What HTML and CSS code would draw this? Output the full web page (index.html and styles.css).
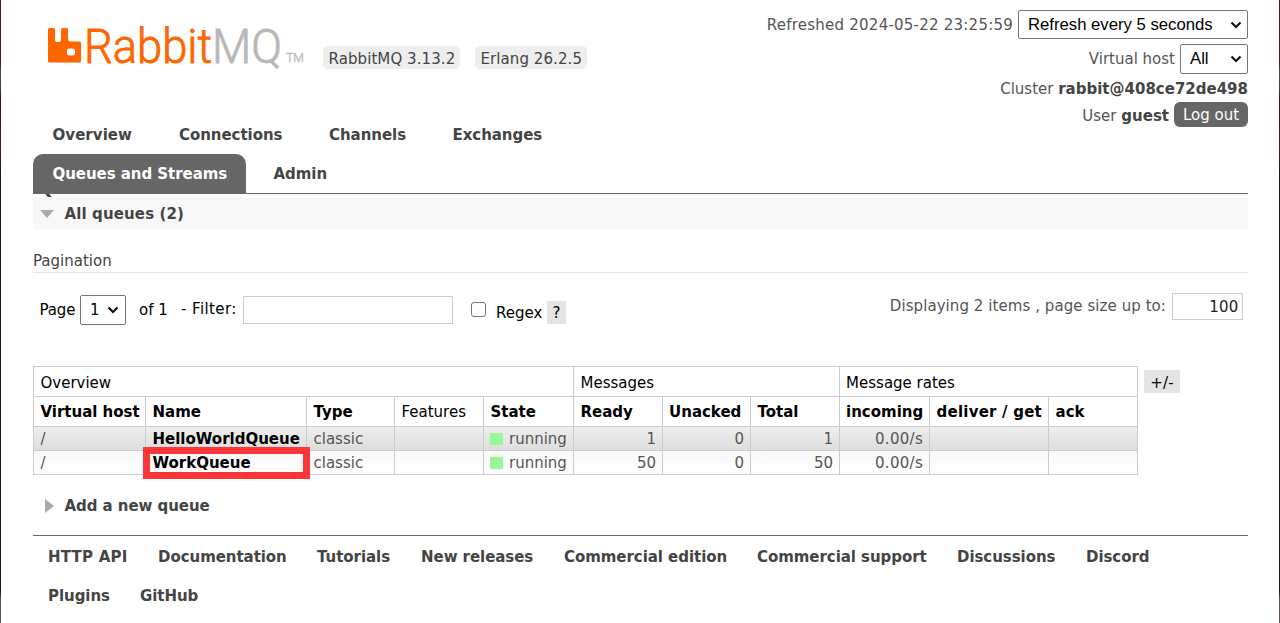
FILE: index.html
```html
<!DOCTYPE html>
<html lang="en">
<head>
<meta charset="utf-8">
<title>RabbitMQ Management</title>
<link rel="stylesheet" href="styles.css">
</head>
<body>
<div class="page">
  <header class="header">
    <div class="brand">
      <svg class="logo" width="260" height="60" viewBox="0 -10 260 60">
        <path class="mark" fill-rule="evenodd" d="M1.500 6h4q1.500 0 1.500 1.500V18q0 2 2 2h2q2 0 2-2V7.500Q13 6 14.500 6h4Q20 6 20 7.500V17q0 2.500 2.500 2.500h9Q33 19.500 33 21V39q0 1.500-1.500 1.500h-30Q0 40.500 0 39V7.500Q0 6 1.500 6zM21 26.500q-2 0-2 2v3q0 2 2 2h4q2 0 2-2v-3q0-2-2-2z"/>
        <text class="wm" x="36" y="40.500" textLength="198" lengthAdjust="spacingAndGlyphs"><tspan class="orange">Rabbit</tspan><tspan class="gray">MQ</tspan></text>
        <text class="tm gray" x="238" y="40" textLength="18" lengthAdjust="spacingAndGlyphs">TM</text>
      </svg>
      <span class="version v1">RabbitMQ 3.13.2</span>
      <span class="version v2">Erlang 26.2.5</span>
    </div>
    <div class="status">
      <div class="line l1"><span class="refreshed">Refreshed 2024-05-22 23:25:59</span>
        <span class="select refresh">Refresh every 5 seconds<svg class="chev" width="12" height="8" viewBox="0 0 12 8"><path d="M1.500 1.500 6 6l4.500-4.500"/></svg></span></div>
      <div class="line l2"><span>Virtual host</span>
        <span class="select vhost">All<svg class="chev" width="12" height="8" viewBox="0 0 12 8"><path d="M1.500 1.500 6 6l4.500-4.500"/></svg></span></div>
      <div class="line l3"><span>Cluster <b>rabbit@408ce72de498</b></span></div>
      <div class="line l4"><span>User <b>guest</b></span><span class="logout">Log out</span></div>
    </div>
  </header>
  <nav class="tabs">
    <div class="tabrow"><a class="t1">Overview</a><a class="t2">Connections</a><a class="t3">Channels</a><a class="t4">Exchanges</a></div>
    <div class="tabrow second"><a class="active">Queues and Streams</a><a class="admin">Admin</a></div>
  </nav>
  <main>
    <div class="title"><h1>Queues</h1></div>
    <h2 class="section"><svg width="14" height="8" viewBox="0 0 14 8"><path d="M0 0h14L7 8z"/></svg><span class="all">All queues (2)</span></h2>
    <h3 class="pagination">Pagination</h3>
    <div class="filters">
      <span class="page-l">Page</span>
      <span class="select pagesel">1<svg class="chev" width="12" height="8" viewBox="0 0 12 8"><path d="M1.500 1.500 6 6l4.500-4.500"/></svg></span>
      <span class="of">of 1</span><span class="filter-l">- Filter:</span>
      <span class="input"></span><span class="check"></span><span class="regex">Regex</span><span class="help">?</span>
      <span class="showing">Displaying 2 items , page size up to:</span><span class="size">100</span>
    </div>
    <div class="listing">
      <table>
        <colgroup><col class="c112"><col class="c161"><col class="c88"><col class="c89"><col class="c90"><col class="c89"><col class="c88"><col class="c89"><col class="c90"><col class="c119"><col class="c89"></colgroup>
        <thead>
          <tr><td colspan="5">Overview</td><td colspan="3">Messages</td><td colspan="3" class="tight">Message rates</td></tr>
          <tr><th>Virtual host</th><th>Name</th><th>Type</th><td class="features">Features</td><th>State</th><th>Ready</th><th class="tight">Unacked</th><th>Total</th><th class="tight">incoming</th><th class="deliver">deliver / get</th><th>ack</th></tr>
        </thead>
        <tbody>
          <tr class="alt"><td>/</td><td><b class="name">HelloWorldQueue</b></td><td>classic</td><td></td><td class="state"><i class="dot"></i>running</td><td class="r">1</td><td class="r">0</td><td class="r">1</td><td class="r rate">0.00/s</td><td></td><td></td></tr>
          <tr class="plain"><td>/</td><td class="marked"><b class="name">WorkQueue</b><i class="mark-box"></i></td><td>classic</td><td></td><td class="state"><i class="dot"></i>running</td><td class="r">50</td><td class="r">0</td><td class="r">50</td><td class="r rate">0.00/s</td><td></td><td></td></tr>
        </tbody>
      </table>
      <span class="plus">+/-</span>
    </div>
    <h2 class="section closed"><svg width="9" height="14" viewBox="0 0 9 14"><path d="M0 0l9 7-9 7z"/></svg><span>Add a new queue</span></h2>
  </main>
  <footer>
    <div class="frow"><a class="f1">HTTP API</a><a class="f2">Documentation</a><a class="f3">Tutorials</a><a class="f4">New releases</a><a class="f5">Commercial edition</a><a class="f6">Commercial support</a><a class="f7">Discussions</a><a class="f8">Discord</a></div>
    <div class="frow"><a class="f9">Plugins</a><a class="f10">GitHub</a></div>
  </footer>
</div>
</body>
</html>
```

FILE: styles.css
```css
* { box-sizing: border-box; }
body { margin: 0; background: #fff; color: #444; font: 15px/20px Verdana, "DejaVu Sans", sans-serif; overflow: hidden; }
.page { height: 623px; padding: 0 31px 0 32px; border-left: 1px solid #2a2024; border-right: 1px solid #4a4a4a; border-image: linear-gradient(#5a1522 0, #5a1522 65px, #4a4a38 70px, #4a4a38 85px, #3a1018 100px, #5a1522 150px, #1e1a1c 175px, #1e1a1c 590px, #6a5050 600px, #6a5050) 1; white-space: nowrap; }
b, th, h2, a { font-weight: bold; }
.header { display: flex; justify-content: space-between; height: 114px; }
.brand { display: flex; padding: 22px 0 0 15px; }
.logo { display: block; width: 260px; margin-top: -10px; }
.wm { font: 300 47.500px Roboto, sans-serif; stroke-width: 0.900; }
.tm { font: 300 13px Roboto, sans-serif; stroke-width: 0.400; }
.orange, .mark { fill: #f60; }
.gray { fill: #b8b8b8; stroke: #b8b8b8; }
.orange { stroke: #f60; }
.version { height: 23px; margin-top: 24px; padding: 3px 0 0 5.500px; border-radius: 5px; background: #eee; line-height: 20px; letter-spacing: 0.080px; }
.v1 { width: 137px; margin-left: 15px; }
.v2 { width: 112px; margin-left: 15px; }
.status { padding-top: 10px; }
.line { display: flex; justify-content: flex-end; align-items: center; color: #555; }
.line b { color: #444; }
.refreshed { letter-spacing: 0.230px; }
.l1 { height: 29px; }
.l2 { height: 30px; margin-top: 5px; }
.l3 { height: 20px; margin-top: 5px; }
.l4 { height: 25px; margin-top: 3px; line-height: 22px; }
.l4 > span:first-child { padding-top: 2px; }
.select { display: flex; align-items: center; justify-content: space-between; border: 1px solid #767676; border-radius: 2px; background: #fff; color: #000; padding: 0 5px 0 9px; font: 16.700px "Liberation Sans", Arial, sans-serif; }
.chev path { fill: none; stroke: #111; stroke-width: 2.200; }
.refresh { width: 230px; height: 29px; margin-left: 5px; }
.vhost { width: 68px; height: 30px; margin-left: 5px; }
.logout { width: 74px; height: 25px; margin-left: 5px; border-radius: 6px; background: #666; color: #fff; text-align: center; line-height: 27px; }
.tabs { height: 80px; border-bottom: 1px solid #666; }
.tabrow { display: flex; height: 40px; padding: 11px 0 0 19.500px; letter-spacing: -0.050px; }
.t1 { width: 126.500px; letter-spacing: 0.050px; }
.t2 { width: 150px; }
.t3 { width: 123.500px; }
.tabrow.second { padding: 0; }
.active { width: 213px; height: 40px; padding-left: 19.500px; border-radius: 10px 10px 0 0; background: #666; color: #fff; line-height: 41px; }
.admin { margin-left: 27.500px; line-height: 41px; }
.title { display: flex; align-items: flex-end; height: 4px; overflow: hidden; padding-left: 3px; }
h1 { margin: 0 0 -1px; font-size: 21px; line-height: 24px; }
.section { display: flex; align-items: center; height: 31px; margin: 0; padding-left: 7px; gap: 10.500px; background: #f8f8f8; font-size: 15px; letter-spacing: -0.060px; }
.all { letter-spacing: 0.120px; }
.section path { fill: #aaa; }
.pagination { height: 22px; margin: 22px 0 0; border-bottom: 1px solid #e4e4e4; font-size: 15px; font-weight: normal; line-height: 21px; }
.filters { display: flex; height: 93px; padding-top: 20px; color: #000; align-items: flex-start; }
.page-l { width: 47px; padding-left: 6.500px; line-height: 35px; letter-spacing: -0.100px; }
.pagesel { width: 46px; height: 30px; margin-top: 2px; padding: 0 6px 0 9px; font: 15px "DejaVu Sans", sans-serif; }
.of { width: 55px; padding-left: 13px; line-height: 35px; }
.filter-l { width: 62px; line-height: 33px; letter-spacing: 0.400px; }
.input { width: 210px; height: 28px; margin-top: 3px; border: 1px solid #ccc; }
.check { width: 15px; height: 15px; margin: 9px 10px 0 18px; border: 1px solid #767676; border-radius: 3px; }
.regex { width: 51px; line-height: 40px; }
.help { width: 19px; height: 23px; margin-top: 8px; background: #e4e4e4; text-align: center; line-height: 24px; }
.showing { margin-left: auto; color: #555; line-height: 27px; letter-spacing: 0.070px; }
.size { width: 71px; height: 27px; margin: 0 5px 0 6px; padding-right: 3.500px; border: 1px solid #ccc; text-align: right; line-height: 26px; letter-spacing: 0.200px; color: #222; }
.listing { display: flex; height: 109px; }
table { width: 1105px; height: 109px; table-layout: fixed; border-collapse: collapse; }
.c112 { width: 112px; } .c161 { width: 161px; } .c88 { width: 88px; } .c89 { width: 89px; } .c90 { width: 90px; } .c119 { width: 119px; }
td, th { height: 30px; padding: 2px 6px 0 6.500px; border: 1px solid #ccc; color: #000; text-align: left; line-height: 20px; }
th { padding-top: 1px; letter-spacing: -0.020px; }
.features { padding-top: 0; }
.tight { padding-left: 6px; }
.deliver { letter-spacing: 0.220px; }
tbody td { height: 24px; padding-top: 0; color: #555; }
.r { text-align: right; }
.rate { letter-spacing: 0.300px; }
.state { padding-left: 6px; }
.alt { background: linear-gradient(#eee, #ddd); }
.plain { background: linear-gradient(#f8f8f8, #fff); }
.name { color: #000; }
.dot { display: inline-block; width: 13px; height: 12px; margin-right: 6px; background: #98f898; vertical-align: -1px; }
.marked { position: relative; }
.mark-box { position: absolute; left: -3px; top: -4px; width: 167px; height: 32px; border: 7px solid #fc3636; }
.plus { width: 36px; height: 23px; margin: 4px 0 0 6px; background: #e4e4e4; color: #000; text-align: center; line-height: 26px; letter-spacing: 0.300px; }
.closed { margin-top: 15px; padding-left: 12px; gap: 10.500px; background: none; }
footer { margin-top: 14px; border-top: 1px solid #666; padding: 11px 0 0 15px; }
.frow { display: flex; height: 39px; letter-spacing: -0.050px; }
.f1 { letter-spacing: 0.220px; }
.f1 { width: 110px; } .f2 { width: 159px; } .f3 { width: 104px; } .f4 { width: 143px; } .f5 { width: 193px; } .f6 { width: 200px; } .f7 { width: 129px; } .f9 { width: 92px; }
```
